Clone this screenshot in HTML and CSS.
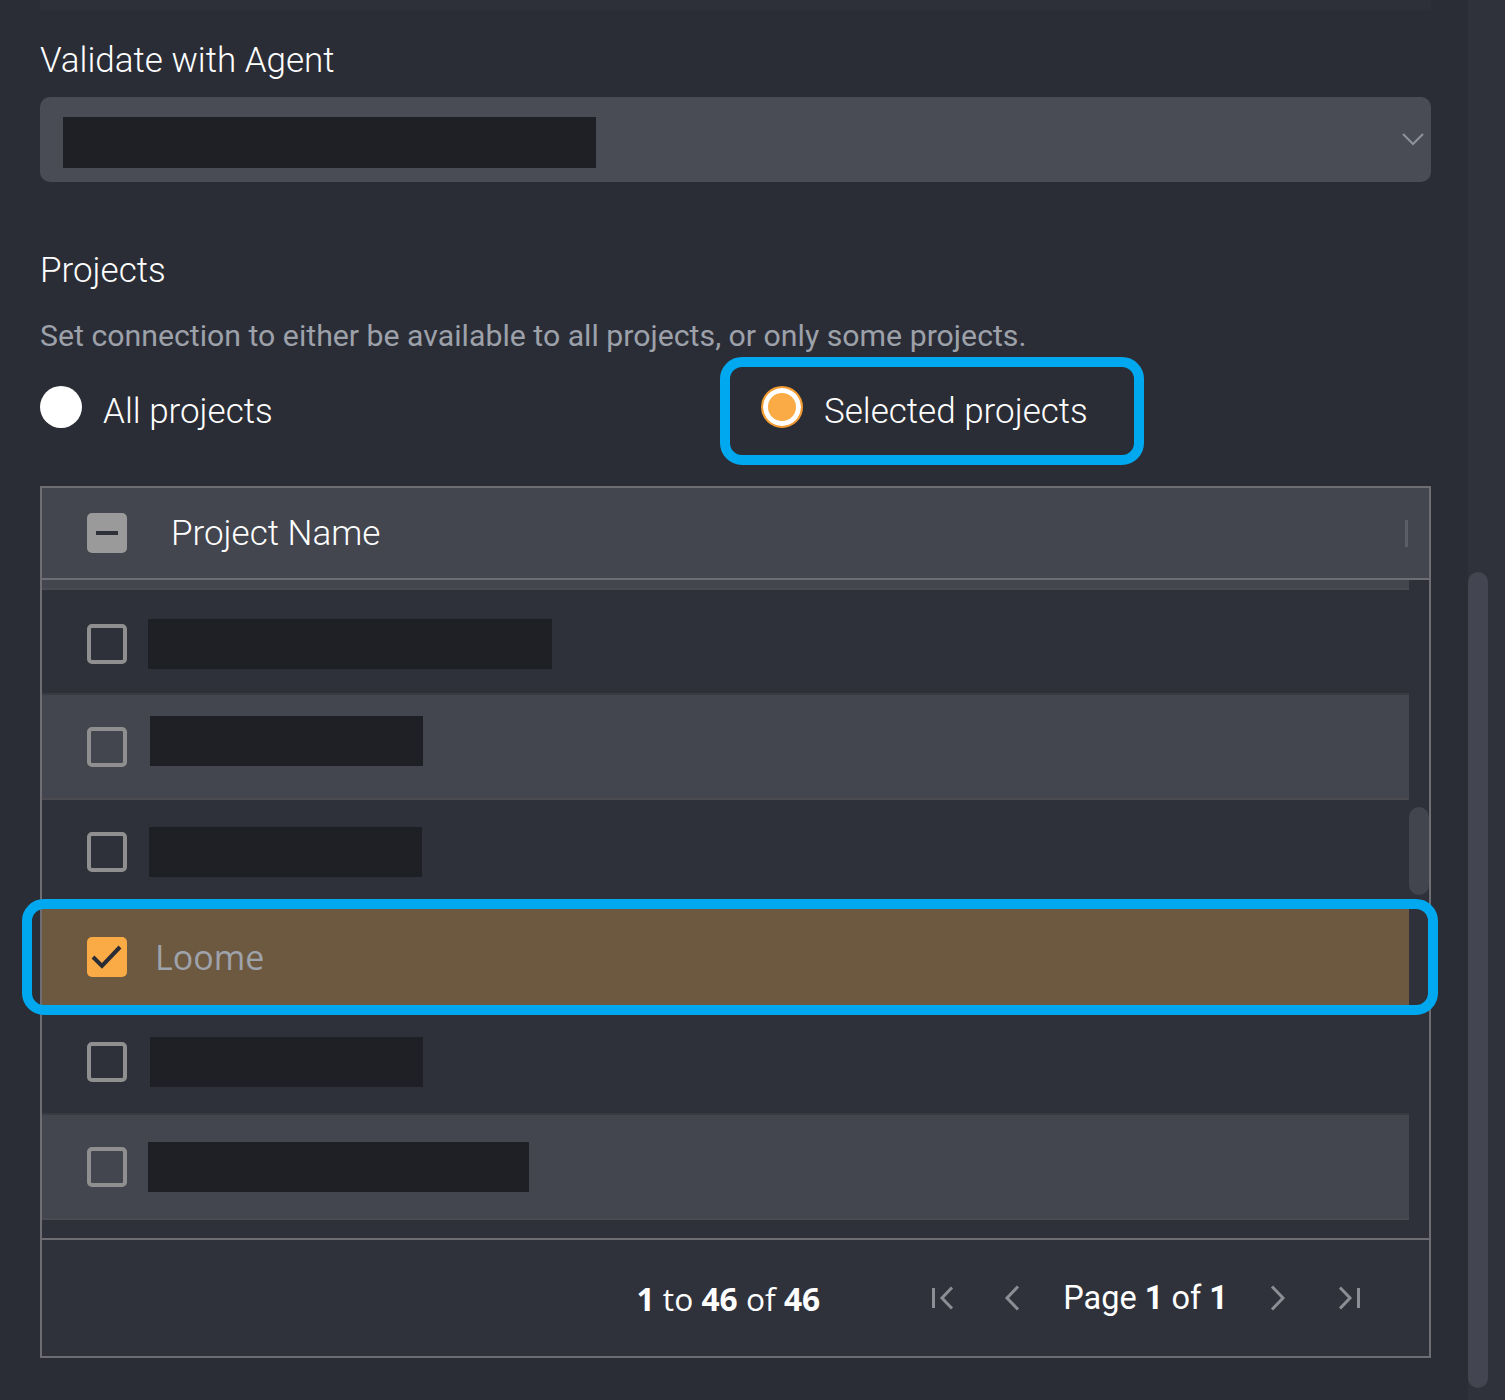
FILE: index.html
```html
<!DOCTYPE html>
<html lang="en">
<head>
    <meta charset="UTF-8">
    <meta name="viewport" content="width=device-width, initial-scale=1.0">
    <title>Connection Settings</title>
    <link rel="stylesheet" href="styles.css">
</head>
<body>
    <div class="panel">
        <div class="top-edge"></div>

        <div class="field-label">Validate with Agent</div>
        <div class="select">
            <div class="redact select-value"></div>
            <svg class="chevron" width="22" height="13" viewBox="0 0 22 13">
                <polyline points="1,1 11,11 21,1" fill="none" stroke="#8e929b" stroke-width="2"/>
            </svg>
        </div>

        <div class="field-label section">Projects</div>
        <div class="hint">Set connection to either be available to all projects, or only some projects.</div>

        <div class="radios">
            <label class="radio-option">
                <span class="radio"></span>
                <span class="radio-text">All projects</span>
            </label>
            <label class="radio-option flagged">
                <span class="radio checked"></span>
                <span class="radio-text">Selected projects</span>
            </label>
        </div>

        <div class="grid">
            <div class="grid-header">
                <span class="checkbox partial"><span class="dash"></span></span>
                <span class="header-text">Project Name</span>
                <span class="resize-handle"></span>
            </div>

            <div class="grid-body">
                <div class="rows">
                    <div class="row-peek"></div>
                    <div class="row">
                        <span class="checkbox"></span>
                        <span class="redact" style="width: 404px"></span>
                    </div>
                    <div class="row alt">
                        <span class="checkbox"></span>
                        <span class="redact raised" style="width: 273px; margin-left: 23px"></span>
                    </div>
                    <div class="row">
                        <span class="checkbox"></span>
                        <span class="redact" style="width: 273px; margin-left: 22px"></span>
                    </div>
                    <div class="row selected flagged">
                        <span class="checkbox checked">
                            <svg width="40" height="40" viewBox="0 0 40 40">
                                <polyline points="6,20 15,29 33,10" fill="none" stroke="#2b2d36" stroke-width="4"/>
                            </svg>
                        </span>
                        <span class="row-text">Loome</span>
                    </div>
                    <div class="row">
                        <span class="checkbox"></span>
                        <span class="redact" style="width: 273px; margin-left: 23px"></span>
                    </div>
                    <div class="row alt">
                        <span class="checkbox"></span>
                        <span class="redact" style="width: 381px"></span>
                    </div>
                    <div class="row-tail"></div>
                </div>
                <div class="grid-scroll">
                    <div class="grid-thumb"></div>
                </div>
            </div>

            <div class="grid-footer">
                <span class="summary"><b>1</b> to <b>46</b> of <b>46</b></span>
                <svg class="pager first" width="22" height="24" viewBox="0 0 22 24">
                    <line x1="1.5" y1="2" x2="1.5" y2="22" stroke="#8b8e95" stroke-width="3"/>
                    <polyline points="20,1.5 10,12 20,22.5" fill="none" stroke="#8b8e95" stroke-width="3"/>
                </svg>
                <svg class="pager prev" width="16" height="26" viewBox="0 0 16 26">
                    <polyline points="14,1.5 3,13 14,24.5" fill="none" stroke="#8b8e95" stroke-width="3"/>
                </svg>
                <span class="page-text">Page <b>1</b> of <b>1</b></span>
                <svg class="pager next" width="16" height="26" viewBox="0 0 16 26">
                    <polyline points="2,1.5 13,13 2,24.5" fill="none" stroke="#8b8e95" stroke-width="3"/>
                </svg>
                <svg class="pager last" width="22" height="24" viewBox="0 0 22 24">
                    <polyline points="2,1.5 12,12 2,22.5" fill="none" stroke="#8b8e95" stroke-width="3"/>
                    <line x1="20.5" y1="2" x2="20.5" y2="22" stroke="#8b8e95" stroke-width="3"/>
                </svg>
            </div>
        </div>
    </div>

    <div class="page-scroll">
        <div class="page-thumb"></div>
    </div>
</body>
</html>
```

FILE: styles.css
```css
* {
    box-sizing: border-box;
}
body {
    margin: 0;
    background-color: #2b2d36;
    color: #ffffff;
    font-family: Roboto, "Liberation Sans", sans-serif;
    display: flex;
    min-height: 1400px;
}
.panel {
    width: 1468px;
    padding: 0 37px 0 40px;
}
.top-edge {
    height: 10px;
    background-color: #2e3039;
}
.field-label {
    margin-top: 29px;
    font-size: 35px;
    font-weight: 300;
    line-height: 44px;
}
.field-label.section {
    margin-top: 67px;
}
.select {
    margin-top: 14px;
    height: 85px;
    border-radius: 10px;
    background-color: #4a4c55;
    display: flex;
    align-items: center;
    padding: 0 7px 0 23px;
}
.redact {
    display: block;
    height: 50px;
    background-color: #1f2026;
    margin-left: 21px;
}
.redact.raised {
    margin-top: -12px;
}
.select-value {
    width: 533px;
    height: 51px;
    margin: 6px 0 0 0;
}
.chevron {
    margin-left: auto;
}
.hint {
    margin-top: 25px;
    font-size: 30.25px;
    line-height: 36px;
    color: #9da1aa;
}
.radios {
    margin-top: 32px;
    display: flex;
    height: 42px;
}
.radio-option {
    display: flex;
    align-items: center;
    gap: 21px;
    position: relative;
}
.radio-option:first-child {
    width: 721px;
}
.radio {
    width: 42px;
    height: 42px;
    flex: none;
    border-radius: 50%;
    background-color: #ffffff;
}
.radio.checked {
    background-color: #fbab45;
    border: 2px solid #f39c32;
    box-shadow: inset 0 0 0 5px #ffffff;
}
.radio-text {
    font-size: 35px;
    font-weight: 300;
    padding-top: 8px;
}
.flagged::after {
    content: "";
    position: absolute;
    border: 10px solid #00a8f0;
    border-radius: 22px;
    pointer-events: none;
    z-index: 1;
}
.radio-option.flagged::after {
    top: -29px;
    bottom: -37px;
    left: -41px;
    right: -56px;
}
.grid {
    margin-top: 58px;
    border: 2px solid #6e6d74;
}
.grid-header {
    height: 92px;
    background-color: #43454f;
    border-bottom: 2px solid #6e6d74;
    display: flex;
    align-items: center;
    padding-left: 45px;
}
.header-text {
    margin-left: 44px;
    font-size: 35px;
    font-weight: 300;
}
.resize-handle {
    margin-left: auto;
    margin-right: 21px;
    width: 3px;
    height: 27px;
    background-color: #5c5e67;
}
.checkbox {
    width: 40px;
    height: 40px;
    flex: none;
    border: 4px solid #8f8f8f;
    border-radius: 5px;
    display: flex;
    align-items: center;
    justify-content: center;
}
.checkbox.partial {
    background-color: #9a9a9a;
    border: none;
}
.checkbox.partial .dash {
    width: 22px;
    height: 4px;
    background-color: #2f313a;
}
.checkbox.checked {
    background-color: #fbab45;
    border: none;
}
.grid-body {
    display: flex;
    background-color: #2f313a;
}
.rows {
    flex: 1;
}
.row-peek {
    height: 10px;
    background-color: #43454f;
    border-bottom: 2px solid #4a4a50;
}
.row {
    height: 105px;
    display: flex;
    align-items: center;
    padding-left: 45px;
    background-color: #2f313a;
    border-bottom: 2px solid #3a3b42;
    position: relative;
}
.row:nth-child(2) {
    padding-top: 4px;
}
.row.alt {
    background-color: #43454f;
    border-bottom-color: #4a4a50;
}
.row.selected {
    background-color: #6d5840;
    border-bottom-color: #6d5840;
}
.row.flagged::after {
    top: -6px;
    bottom: -7px;
    left: -20px;
    right: -29px;
}
.row-text {
    margin-left: 28px;
    font-family: "Open Sans", "Noto Sans", sans-serif;
    font-size: 34px;
    color: #9ea2aa;
}
.row-tail {
    height: 18px;
}
.grid-scroll {
    width: 20px;
    padding-top: 227px;
}
.grid-thumb {
    height: 88px;
    border-radius: 10px;
    background-color: #42444e;
}
.grid-footer {
    height: 118px;
    border-top: 2px solid #6e6d74;
    background-color: #30323b;
    display: flex;
    align-items: center;
    justify-content: flex-end;
    padding-right: 69px;
}
.summary {
    font-family: "Open Sans", "Noto Sans", sans-serif;
    font-size: 31.7px;
    margin-right: 112px;
}
.pager.prev {
    margin-left: 50px;
}
.page-text {
    margin-left: 43px;
    font-size: 32.5px;
}
.pager.next {
    margin-left: 42px;
}
.pager.last {
    margin-left: 52px;
}
.page-scroll {
    width: 37px;
    background-color: #30323b;
    padding-top: 572px;
}
.page-thumb {
    width: 20px;
    height: 816px;
    border-radius: 10px;
    background-color: #434550;
}
```
